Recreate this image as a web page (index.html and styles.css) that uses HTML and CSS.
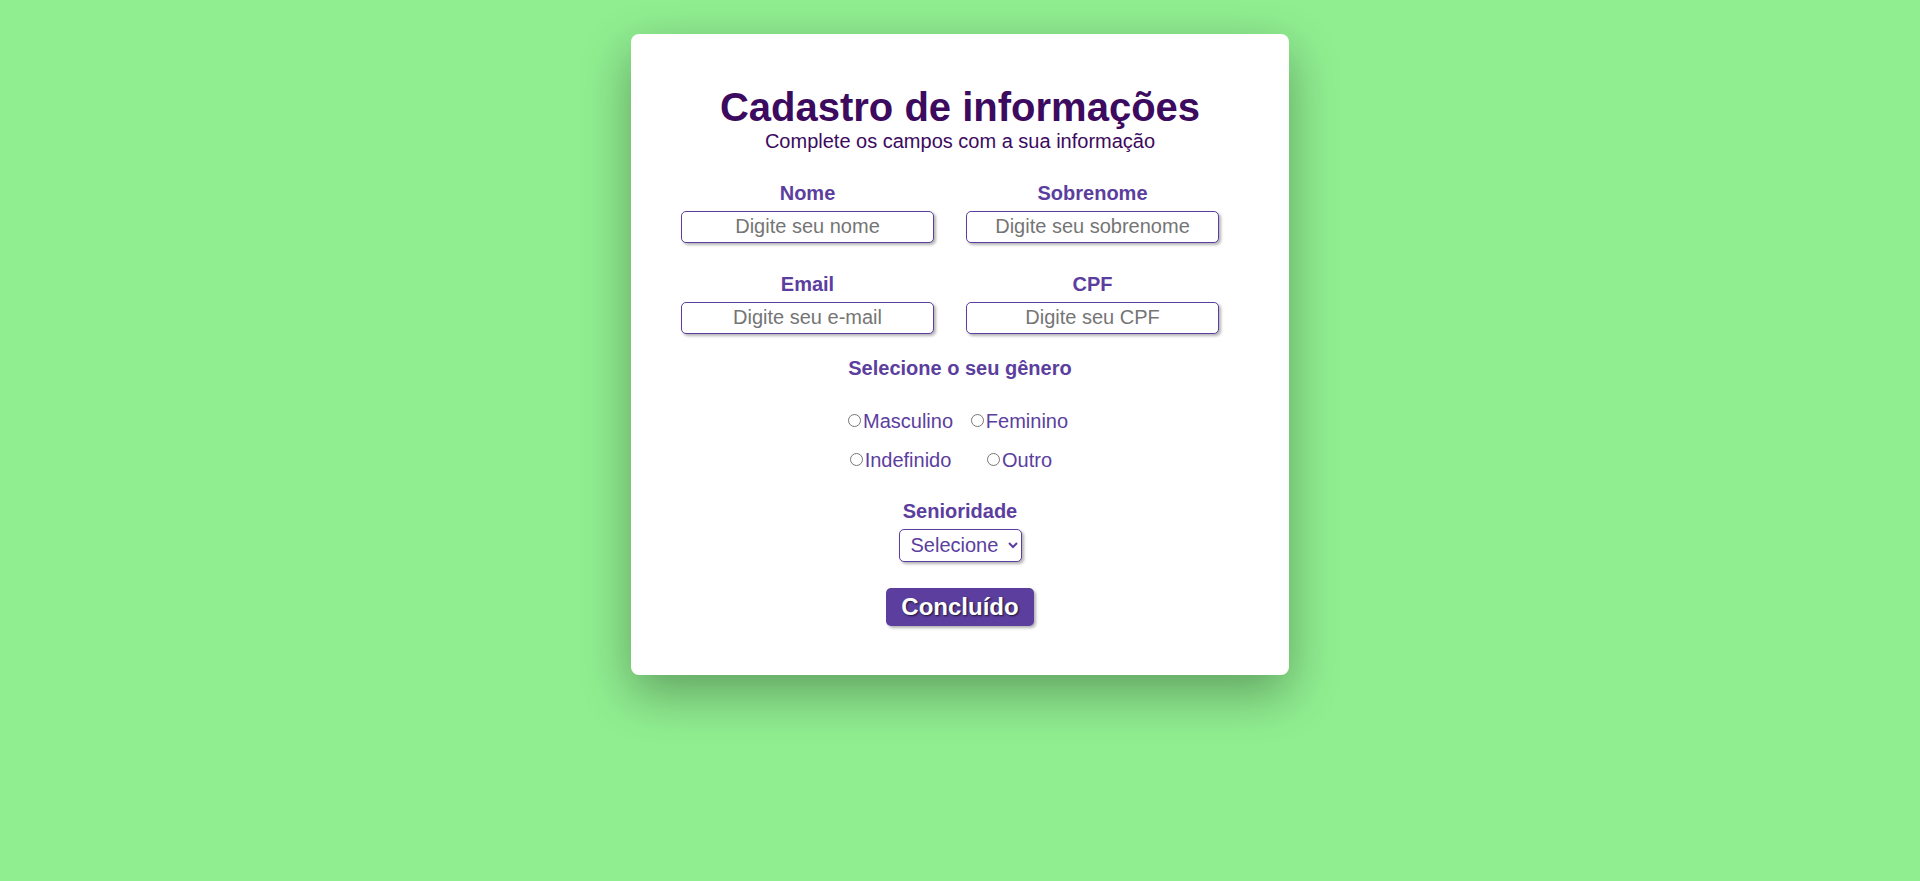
FILE: index.html
```html
<!DOCTYPE html>
<html lang="pt-BR">
<head>
<meta charset="utf-8">
<title>Cadastro de informações</title>
<link rel="stylesheet" href="styles.css">
</head>
<body>
<main class="page">
  <form class="card">
    <h1 class="title">Cadastro de informações</h1>
    <p class="subtitle">Complete os campos com a sua informação</p>

    <div class="fields">
      <div class="field">
        <label class="label" for="nome">Nome</label>
        <input class="input" id="nome" type="text" placeholder="Digite seu nome">
      </div>
      <div class="field">
        <label class="label" for="sobrenome">Sobrenome</label>
        <input class="input" id="sobrenome" type="text" placeholder="Digite seu sobrenome">
      </div>
      <div class="field">
        <label class="label" for="email">Email</label>
        <input class="input" id="email" type="email" placeholder="Digite seu e-mail">
      </div>
      <div class="field">
        <label class="label" for="cpf">CPF</label>
        <input class="input" id="cpf" type="text" placeholder="Digite seu CPF">
      </div>
    </div>

    <div class="gender">
      <div class="label">Selecione o seu gênero</div>
      <div class="radios">
        <label class="radio"><input type="radio" name="genero">Masculino</label>
        <label class="radio"><input type="radio" name="genero">Feminino</label>
        <label class="radio"><input type="radio" name="genero">Indefinido</label>
        <label class="radio"><input type="radio" name="genero">Outro</label>
      </div>
    </div>

    <div class="senior">
      <label class="label" for="senioridade">Senioridade</label>
      <select class="select" id="senioridade">
        <option>Selecione</option>
        <option>Júnior</option>
        <option>Pleno</option>
        <option>Sênior</option>
      </select>
    </div>

    <div class="actions">
      <button class="button" type="button">Concluído</button>
    </div>
  </form>
</main>
</body>
</html>
```

FILE: styles.css
```css
html, body {
  margin: 0;
  padding: 0;
}

body {
  background: #90ee90;
  font-family: "Liberation Sans", Arial, sans-serif;
  min-height: 881px;
}

.page {
  display: flex;
  justify-content: center;
  padding-top: 34px;
}

.card {
  width: 658px;
  box-sizing: border-box;
  padding: 50px 50px 49px;
  background: #ffffff;
  border-radius: 8px;
  box-shadow: 0 18px 50px rgba(0, 0, 0, 0.33);
  display: flex;
  flex-direction: column;
}

.title {
  margin: 0;
  font-size: 40px;
  font-weight: bold;
  line-height: 46px;
  text-align: center;
  color: #3c0a5e;
}

.subtitle {
  margin: 0;
  font-size: 20px;
  line-height: 23px;
  text-align: center;
  color: #3c0a5e;
}

.fields {
  display: grid;
  grid-template-columns: 253px 253px;
  column-gap: 32px;
  row-gap: 30.5px;
  margin-top: 29px;
}

.field {
  display: flex;
  flex-direction: column;
  align-items: center;
  gap: 5.5px;
}

.label {
  font-size: 20px;
  font-weight: bold;
  line-height: 23px;
  color: #5b3e9e;
  text-align: center;
}

.input {
  width: 253px;
  height: 32px;
  box-sizing: border-box;
  border: 1px solid #5b3e9e;
  border-radius: 5px;
  box-shadow: 2px 2px 3px rgba(0, 0, 0, 0.3);
  font-family: "Liberation Sans", Arial, sans-serif;
  font-size: 20px;
  text-align: center;
  padding: 0 2px;
  outline: none;
}

.input::placeholder {
  color: #757575;
}

.gender {
  margin-top: 23.7px;
  display: flex;
  flex-direction: column;
  align-items: center;
}

.radios {
  display: grid;
  grid-template-columns: 119px 119px;
  justify-content: center;
  justify-items: center;
  row-gap: 16px;
  margin-top: 30px;
}

.radio {
  display: inline-flex;
  align-items: center;
  font-size: 20px;
  line-height: 23px;
  color: #5b3e9e;
}

.radio input {
  appearance: none;
  -webkit-appearance: none;
  box-sizing: border-box;
  width: 13px;
  height: 13px;
  border: 1px solid #767676;
  border-radius: 50%;
  background: #ffffff;
  margin: 0 2px 2px 0;
}

.senior {
  margin-top: 28px;
  display: flex;
  flex-direction: column;
  align-items: center;
  gap: 5.6px;
}

.select {
  height: 33px;
  box-sizing: border-box;
  border: 1px solid #5b3e9e;
  border-radius: 5px;
  box-shadow: 2px 2px 3px rgba(0, 0, 0, 0.3);
  background: #ffffff;
  color: #5b3e9e;
  font-family: "Liberation Sans", Arial, sans-serif;
  font-size: 20px;
  padding: 0 6px 0 7px;
}

.actions {
  margin-top: 26px;
  display: flex;
  justify-content: center;
}

.button {
  background: #5b3e9e;
  color: #ffffff;
  border: none;
  border-radius: 5px;
  padding: 5px 15px;
  font-family: "Liberation Sans", Arial, sans-serif;
  font-size: 24px;
  font-weight: bold;
  line-height: 28px;
  text-shadow: 1px 1px 2px rgba(0, 0, 0, 0.7);
  box-shadow: 2px 2px 3px rgba(0, 0, 0, 0.3);
  cursor: pointer;
}
```
